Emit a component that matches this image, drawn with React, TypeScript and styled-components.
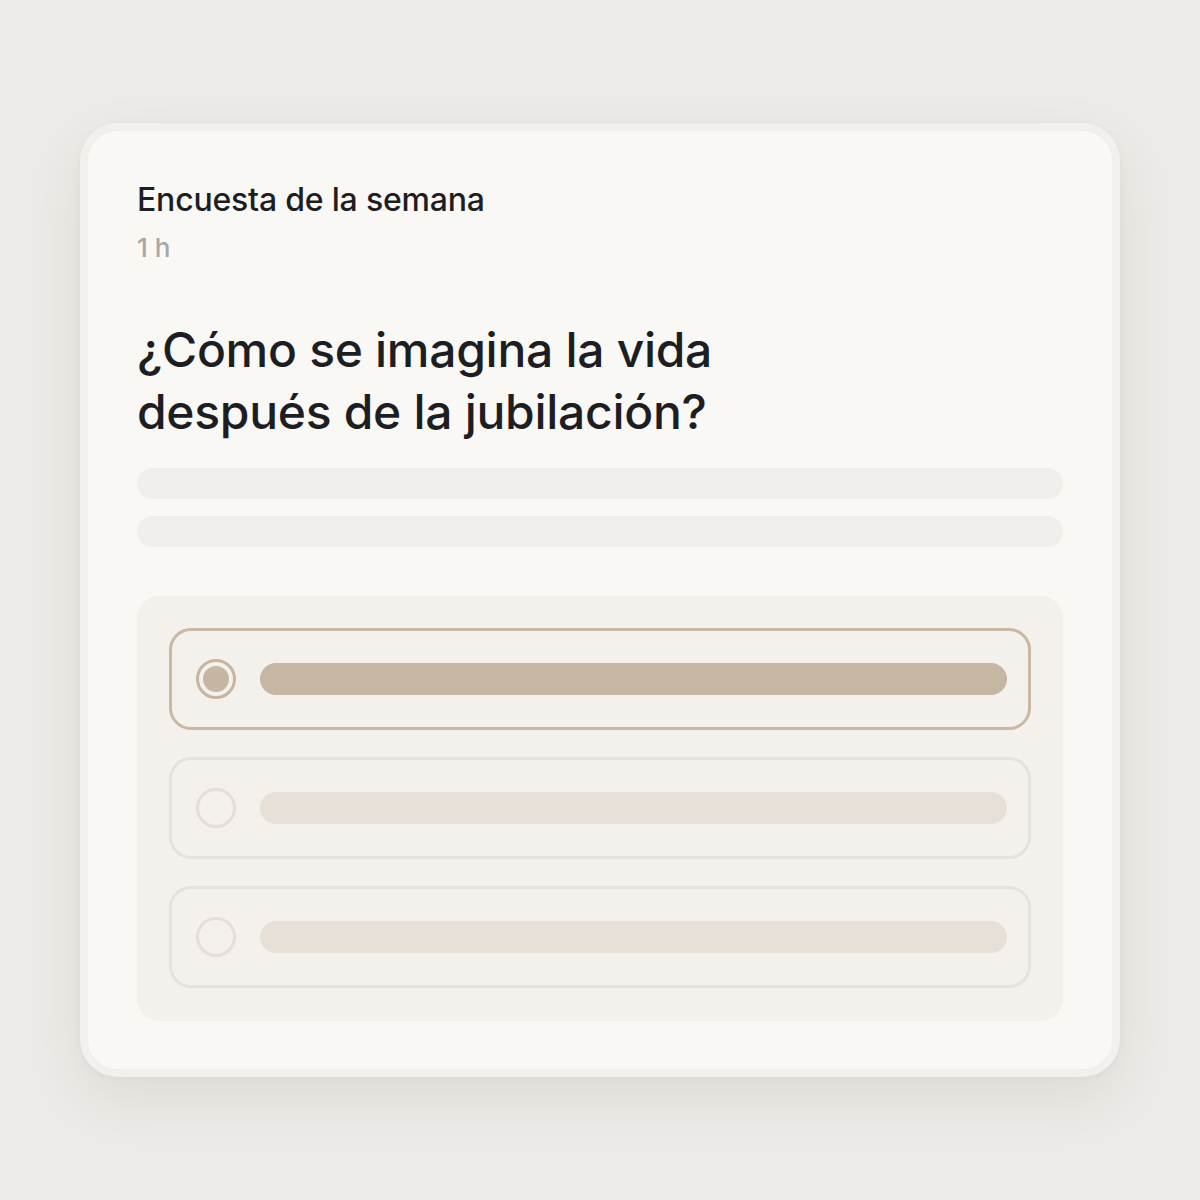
import React from "react";
import styled, { createGlobalStyle } from "styled-components";

const GlobalStyle = createGlobalStyle`
  html, body {
    margin: 0;
    padding: 0;
    background: #ecebe7;
  }
  body {
    font-family: "Inter", "Lato", "Noto Sans", sans-serif;
    -webkit-font-smoothing: antialiased;
  }
`;

const Page = styled.div`
  width: 1200px;
  height: 1200px;
  box-sizing: border-box;
  padding: 123px 80px 0 80px;
  background: #ecebe7;
`;

const Card = styled.div`
  box-sizing: border-box;
  width: 1040px;
  height: 954px;
  border: 8px solid #f1f0ec;
  border-radius: 38px;
  background: #faf8f4;
  padding: 49px 49px 0 49px;
  box-shadow: 0 22px 60px rgba(60, 50, 40, 0.08), 0 2px 8px rgba(60, 50, 40, 0.04);
  display: flex;
  flex-direction: column;
`;

const Header = styled.div`
  display: flex;
  flex-direction: column;
  gap: 10px;
`;

const Title = styled.div`
  font-size: 32px;
  line-height: 40px;
  font-weight: 500;
  color: #1d1e24;
  letter-spacing: -0.2px;
`;

const Time = styled.div`
  font-size: 26px;
  line-height: 36px;
  font-weight: 500;
  color: #a9a8a5;
`;

const Question = styled.h1`
  margin: 53px 0 0 0;
  font-size: 48px;
  line-height: 62px;
  font-weight: 500;
  color: #1d1e24;
  letter-spacing: -0.3px;
`;

const Skeleton = styled.div`
  display: flex;
  flex-direction: column;
  gap: 17px;
  margin-top: 25px;
`;

const SkeletonLine = styled.div`
  height: 31px;
  border-radius: 16px;
  background: #f1efeb;
`;

const Panel = styled.div`
  margin-top: 49px;
  background: #f4f1ec;
  border-radius: 22px;
  padding: 32px 32px 33px 32px;
  display: flex;
  flex-direction: column;
  gap: 27px;
`;

const Option = styled.div<{ $selected?: boolean }>`
  box-sizing: border-box;
  height: 102px;
  border: 3px solid ${(p) => (p.$selected ? "#c9b9a3" : "#e6e2dc")};
  border-radius: 22px;
  display: flex;
  align-items: center;
  padding: 0 21px 0 24px;
  gap: 24px;
`;

const Radio = styled.div<{ $selected?: boolean }>`
  box-sizing: border-box;
  flex: none;
  width: 40px;
  height: 40px;
  border-radius: 50%;
  border: 3px solid ${(p) => (p.$selected ? "#c6b6a1" : "#e4dfd8")};
  display: flex;
  align-items: center;
  justify-content: center;

  &::after {
    content: "";
    display: ${(p) => (p.$selected ? "block" : "none")};
    width: 26px;
    height: 26px;
    border-radius: 50%;
    background: #c6b6a1;
  }
`;

const OptionBar = styled.div<{ $selected?: boolean }>`
  flex: 1;
  height: 32px;
  border-radius: 16px;
  background: ${(p) => (p.$selected ? "#c6b7a2" : "#e7e0d7")};
`;

const options = [true, false, false];

export default function App() {
  return (
    <>
      <GlobalStyle />
      <Page>
        <Card>
          <Header>
            <Title>Encuesta de la semana</Title>
            <Time>1 h</Time>
          </Header>
          <Question>
            ¿Cómo se imagina la vida
            <br />
            después de la jubilación?
          </Question>
          <Skeleton>
            <SkeletonLine />
            <SkeletonLine />
          </Skeleton>
          <Panel>
            {options.map((selected, i) => (
              <Option key={i} $selected={selected}>
                <Radio $selected={selected} />
                <OptionBar $selected={selected} />
              </Option>
            ))}
          </Panel>
        </Card>
      </Page>
    </>
  );
}
